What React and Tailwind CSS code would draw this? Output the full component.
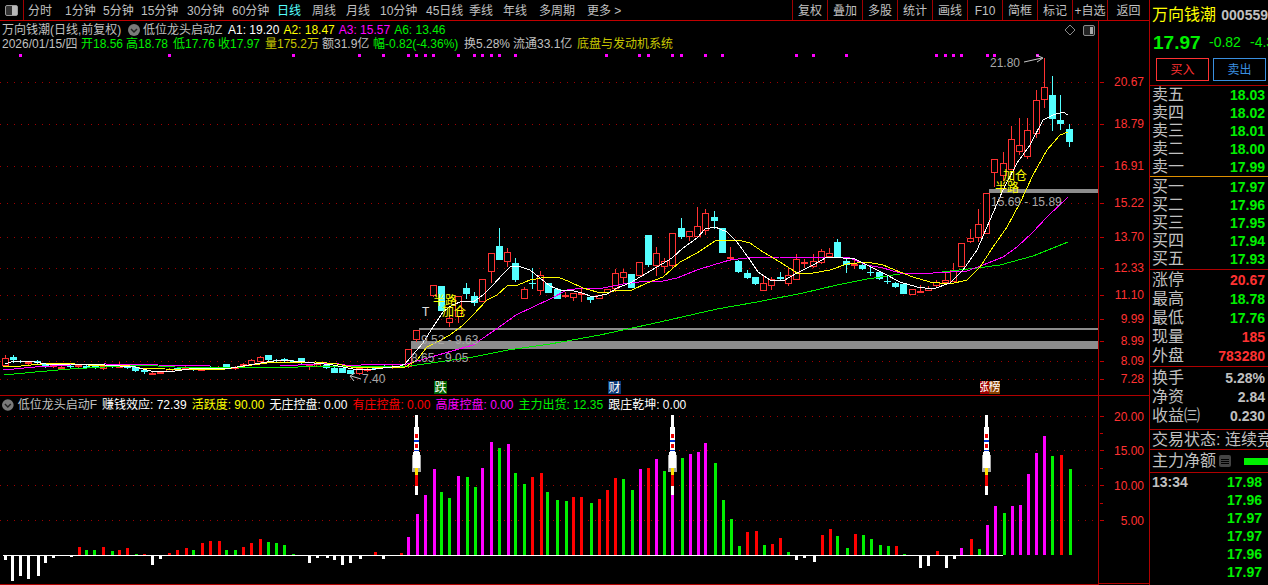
import React from "react";

const R = "#ff3232";
const C = "#54ffff";

// [x, bodyTop, bodyBottom, high, low, kind]
const candles = [
  [5,358,366,355,366,"r"],[13,357,360,355,363,"c"],[20,361,362,360,363,"c"],[28,362,364,361,365,"r"],[37,361,363,360,364,"c"],[45,364,366,363,368,"c"],[53,365,367,364,368,"r"],
  [61,367,368,365,370,"r"],[70,366,367,365,368,"c"],[78,365,367,364,368,"r"],[86,366,368,365,369,"c"],[95,366,368,365,369,"c"],[103,366,369,365,370,"r"],[112,366,367,365,368,"c"],[119,366,367,362,368,"r"],[127,367,368,366,369,"c"],
  [135,367,371,366,372,"c"],[144,370,372,369,374,"c"],[152,373,375,372,375,"r"],[160,372,373,371,374,"r"],[169,369,372,368,372,"r"],[177,368,370,367,371,"c"],[185,367,369,366,370,"r"],[193,368,370,367,371,"c"],[201,369,370,368,371,"r"],[210,367,369,366,370,"c"],[218,367,369,366,370,"r"],
  [226,364,368,364,369,"c"],[235,367,369,366,370,"r"],[243,364,366,363,367,"r"],[251,360,365,359,366,"r"],[260,357,362,356,363,"r"],[268,355,360,355,361,"c"],[276,360,361,359,362,"c"],[284,359,361,358,362,"c"],[293,361,362,360,363,"c"],
  [301,358,363,358,365,"c"],[309,365,367,365,370,"r"],[317,364,367,363,367,"r"],[326,365,368,365,369,"c"],[334,368,373,367,373,"c"],[342,368,373,368,373,"c"],[350,370,374,370,374,"c"],[359,368,374,368,375,"r"],
  [367,369,371,368,372,"r"],[375,367,369,366,370,"c"],[384,366,367,365,368,"c"],[392,366,368,365,369,"r"],[400,366,367,365,368,"r"],
  [408,349,367,349,368,"r"],[416,330,340,330,342,"r"],[433,285,296,285,297,"r"],[441,286,311,286,311,"c"],[449,318,323,316,327,"r"],[458,296,317,296,323,"r"],[466,288,294,283,299,"c"],[474,296,303,292,306,"c"],
  [482,279,302,279,302,"r"],[491,253,272,253,283,"r"],[499,246,260,228,260,"c"],[507,252,262,248,267,"r"],[515,263,280,258,282,"c"],[524,289,299,287,299,"r"],[532,283,284,268,289,"c"],[540,275,291,271,295,"r"],[548,283,293,283,293,"c"],
  [557,289,299,289,299,"c"],[565,295,296,292,298,"r"],[573,293,298,293,301,"r"],[581,293,295,287,302,"r"],[590,297,300,297,303,"c"],[599,295,299,295,299,"r"],[607,289,293,289,293,"r"],[615,273,289,269,292,"r"],[623,272,278,269,283,"r"],[631,274,288,274,288,"c"],[639,262,276,262,276,"r"],
  [648,235,265,235,267,"c"],[656,253,266,247,276,"r"],[664,261,267,258,273,"r"],[672,233,266,233,269,"r"],[681,228,237,218,239,"c"],[689,231,237,231,241,"r"],[697,226,237,207,237,"r"],[705,213,231,209,235,"r"],[714,217,221,211,229,"c"],[722,228,253,228,253,"c"],[730,257,259,247,261,"r"],[738,261,272,260,273,"c"],[747,273,278,270,279,"c"],[755,277,284,277,285,"c"],[763,283,291,275,291,"r"],[771,279,286,277,290,"r"],[780,277,279,272,281,"c"],[788,275,284,268,286,"r"],[796,259,280,254,280,"r"],[804,262,263,259,268,"r"],[813,261,267,254,268,"r"],[821,251,263,249,264,"r"],[829,253,257,248,257,"r"],[837,242,257,239,257,"c"],[846,261,265,259,273,"c"],[854,264,265,260,269,"r"],[862,265,269,264,270,"c"],[870,272,273,267,276,"c"],[879,272,279,271,280,"c"],[887,281,282,276,284,"c"],[895,283,287,282,288,"c"],
  [903,284,294,284,294,"c"],[912,289,295,289,295,"r"],[920,291,292,285,293,"r"],[928,288,291,286,291,"r"],[936,282,286,280,287,"r"],[945,280,283,273,285,"r"],[953,270,282,263,282,"r"],[961,243,267,243,267,"r"],[970,238,242,229,243,"r"],[978,224,238,209,242,"r"],[986,193,234,193,234,"r"],[994,159,173,159,187,"r"],[1003,163,176,152,181,"r"],[1011,139,170,126,170,"r"],[1019,145,152,118,155,"r"],[1027,130,157,118,159,"r"],[1036,100,134,90,138,"r"],[1044,87,100,58,108,"r"],[1052,95,119,76,131,"c"],[1060,120,124,95,130,"c"],[1069,129,142,124,147,"c"],
];

const white = "5,364 14,361 35,362 46,364 70,364 105,365 135,367 151,371 168,372 196,368 231,368 267,362 281,360 305,362 333,365 358,370 375,369 400,366 405,364 423,343 433,327 443,312 452,305 463,301 473,302 483,295 493,285 502,275 510,267 518,266 530,270 540,278 550,286 560,290 570,290 582,293 593,297 607,294 617,288 630,283 640,277 657,267 672,258 683,248 697,238 705,229 715,227 727,232 737,242 750,260 758,272 770,280 783,281 797,273 813,265 827,257 843,258 855,259 867,265 883,273 900,282 917,287 933,289 950,283 963,270 977,250 990,220 1003,190 1017,163 1030,145 1043,120 1053,115 1063,112 1068,115";
const yellow = "3,367 21,366 42,364 61,363 88,365 105,365 130,366 140,368 165,369 200,370 225,369 245,366 267,363 316,362 337,364 351,367 386,367 405,367 417,360 427,347 437,342 450,335 463,325 473,315 487,300 497,295 507,286 518,285 530,280 547,277 558,277 570,282 583,288 597,292 607,293 617,290 632,290 647,283 663,277 680,262 697,253 715,241 738,240 750,243 763,252 780,262 797,273 813,273 830,270 847,264 867,262 883,265 900,272 913,277 930,282 950,284 967,280 980,267 993,247 1007,227 1020,203 1033,175 1047,150 1060,135 1068,132";
const magenta = "3,370 35,367 70,365 105,364 158,365 210,366 280,366 333,363 351,366 372,364 407,364 438,355 473,345 495,330 516,315 550,299 567,290 583,288 603,288 623,284 647,281 663,281 677,278 697,270 713,265 730,260 747,258 780,257 830,257 850,258 867,265 883,268 900,273 933,273 967,271 983,265 1003,257 1017,247 1033,232 1047,217 1068,197";
const green = "4,375 35,372 70,369 105,367 140,365 175,367 280,368 316,366 351,367 410,366 438,362 473,357 508,350 550,344 600,335 660,322 717,309 757,302 803,293 837,285 867,279 900,274 933,273 977,268 1000,265 1033,256 1068,242";

const topGrid = [82,124,166,203,237,268,295,319,341,361,379];
const topAxis = [["20.67",82],["18.79",124],["16.91",166],["15.22",203],["13.70",237],["12.33",268],["11.10",295],["9.99",319],["8.99",341],["8.09",361],["7.28",379]];
const dots = [19,168,292,358,382,407,415,424,432,457,473,481,490,498,514,605,638,647,671,680,704,721,795,812,845,935,944,952,960,986,993,1036];

const W = "#ffffff", G = "#00f000", D = "#ff0000", M = "#ff00ff";
const barsA = [[13,-16,W],[35,-79,W],[58,-64,W],[81,-71,W],[107,-64,W],[129,-25,W],[152,-10,W],[175,-4,W],[201,-7,W],[224,25,D],[246,16,G],[269,16,G],[295,25,D],[318,13,G],[340,16,D],[363,22,D],[389,4,G],[411,4,D],[434,-29,W],[457,-13,W],[483,7,D],[506,16,D],[529,22,D],[551,16,G],[577,37,D],[600,43,D],[623,43,D],[645,16,G],[671,16,G],[694,25,D],[717,37,D],[742,49,D],[765,40,G],[788,37,G],[811,31,G],[836,4,G],[859,-4,W],[882,-25,W],[905,-10,W],[931,-10,W],[953,-16,W],[976,-31,W],[999,-25,W],[1025,-13,W],[1070,10,D],[1093,-13,W],[1142,7,D],[1164,55,M],[1188,124,M],[1213,181,M],[1236,259,M],[1258,190,G],[1281,172,G],[1307,238,M],[1330,235,G],[1353,205,G],[1375,262,M],[1401,340,M],[1424,322,G],[1447,334,M],[1469,247,G],[1495,214,G],[1518,235,D],[1541,247,D]];
const barsB = [[-7,190,G],[19,166,G],[41,163,G],[61,175,D],[81,175,D],[106,157,G],[127,169,D],[148,196,D],[171,232,D],[192,229,G],[213,196,G],[234,259,M],[257,262,D],[278,289,M],[299,253,G],[320,270,M],[344,292,G],[365,304,M],[386,310,M],[406,337,M],[430,277,G],[451,166,G],[472,109,G],[493,28,G],[516,70,D],[537,73,D],[558,31,G],[579,34,D],[602,52,D],[623,10,G],[644,-14,W],[665,-8,W],[689,-20,W],[710,61,D],[731,79,D],[751,58,G],[775,22,G],[796,64,D],[817,61,G],[838,49,G],[861,31,G],[882,28,G],[903,28,D],[924,4,G],[968,-38,W],[989,-32,W],[1010,13,D],[1034,-38,W],[1055,-11,W],[1075,22,M],[1099,49,D],[1120,19,G],[1141,91,M],[1162,148,M],[1185,127,G],[1206,148,M],[1227,151,M],[1248,244,M],[1271,307,M],[1292,358,M],[1313,298,G],[1334,301,D],[1358,259,G]];

const bars = [
  ...barsA.map(([x, h, c]) => [Math.round(x / 2.851), h, c]),
  ...barsB.map(([x, h, c]) => [Math.round(550 + x / 2.613), h, c]),
];

function Candle({ d }) {
  const [x, t, b, hi, lo, k] = d;
  const col = k === "r" ? R : C;
  return (
    <g>
      {hi < t && <rect x={x} y={hi} width="1" height={t - hi} fill={col} />}
      {lo > b && <rect x={x} y={b} width="1" height={lo - b} fill={col} />}
      {k === "r" ? (
        <rect x={x - 3 + 0.5} y={t + 0.5} width="6" height={Math.max(b - t - 1, 1)} fill="#000" stroke={col} strokeWidth="1" />
      ) : (
        <rect x={x - 3} y={t} width="7" height={Math.max(b - t, 1)} fill={col} />
      )}
    </g>
  );
}

function Rocket({ x }) {
  return (
    <g>
      <rect x={x - 1} y="415" width="3" height="80" fill="#fff" />
      <rect x={x - 2} y="427" width="5" height="25" fill="#fff" />
      <rect x={x - 1} y="434" width="3" height="4" fill="#f00000" />
      <rect x={x - 1} y="444" width="3" height="4" fill="#f00000" />
      <rect x={x - 2} y="440" width="5" height="2" fill="#0030d0" />
      <rect x={x - 2} y="450" width="5" height="1" fill="#0030d0" />
      <rect x={x - 4} y="455" width="9" height="17" fill="#a8a8a8" />
      <rect x={x - 3} y="452" width="7" height="16" fill="#fff" />
      <rect x={x - 1} y="468" width="3" height="7" fill="#ffe000" />
      <rect x={x - 1} y="475" width="3" height="11" fill="#f00000" />
    </g>
  );
}

function Round({ cls }) {
  return (
    <svg width="12" height="12" viewBox="0 0 12 12" className={cls}>
      <circle cx="6" cy="6" r="6" fill="#7a7a7a" />
      <path d="M3 5 L6 8 L9 5" fill="none" stroke="#222" strokeWidth="1.5" />
    </svg>
  );
}

const periodItems = [
  ["分时", "w-[37px]"],["1分钟", "w-[38px]"],["5分钟", "w-[38px]"],["15分钟", "w-[46px]"],["30分钟", "w-[45px]"],["60分钟", "w-[45px]"],
  ["日线", "w-[35px] text-[#54ffff]"],["周线", "w-[34px]"],["月线", "w-[34px]"],["10分钟", "w-[46px]"],["45日线", "w-[43px]"],["季线", "w-[34px]"],["年线", "w-[36px]"],["多周期", "w-[48px]"],["更多 >", "w-[34px]"],
];
const tools = ["复权","叠加","多股","统计","画线","F10","简框","标记","+自选","返回"];

const sell = [["卖五","18.03"],["卖四","18.02"],["卖三","18.01"],["卖二","18.00"],["卖一","17.99"]];
const buy = [["买一","17.97"],["买二","17.96"],["买三","17.95"],["买四","17.94"],["买五","17.93"]];
const ticks = ["17.98","17.96","17.97","17.97","17.96","17.97"];

function Row({ label, value, color = "text-[#00f000]", h = "h-[18px]" }) {
  return (
    <div className={`flex items-center justify-between pl-[2px] pr-[3px] ${h}`}>
      <span className="text-[16px] leading-none text-[#c0c0c0]">{label}</span>
      <span className={`text-[14px] font-bold leading-none ${color}`}>{value}</span>
    </div>
  );
}

export default function App() {
  return (
    <div className="flex h-[585px] w-[1268px] overflow-hidden bg-black text-[12px] leading-none text-[#c0c0c0] font-['Liberation_Sans','Noto_Sans_CJK_SC',sans-serif]">
      {/* left: toolbar and charts */}
      <div className="flex w-[1149px] shrink-0 flex-col">
        <div className="flex h-[21px] shrink-0 items-center border-b border-[#c00000]">
          <div className="flex h-[20px] w-[24px] items-center justify-center border-r border-[#a00000]">
            <div className="flex h-[11px] w-[13px] justify-end rounded-[2px] border border-[#9a9a9a] bg-[#333]">
              <div className="h-full w-[5px] bg-[#b8b8b8]" />
            </div>
          </div>
          <div className="ml-[4px] flex pt-[1px]">
            {periodItems.map(([t, c]) => (
              <span key={t} className={`whitespace-nowrap ${c}`}>{t}</span>
            ))}
          </div>
          <div className="ml-auto flex h-full">
            {tools.map((t, i) => (
              <span key={t} className={`flex h-[20px] items-center justify-center border-l border-[#a00000] pt-[1px] ${i === 9 ? "w-[42px]" : "w-[35px]"}`}>{t}</span>
            ))}
          </div>
        </div>

        <div className="flex min-h-0 flex-1">
          {/* panes */}
          <div className="flex w-[1098px] shrink-0 flex-col">
            <div className="relative h-[375px] shrink-0 border-b border-[#b00000]">
              <svg className="absolute left-0 top-[-21px]" width="1098" height="396" shapeRendering="crispEdges">
                {topGrid.map((y) => (
                  <line key={y} x1="0" x2="1098" y1={y + 0.5} y2={y + 0.5} stroke="#a00000" strokeDasharray="1 6" />
                ))}
                {dots.map((x) => <rect key={x} x={x} y="54" width="3" height="3" fill="#ff00ff" />)}
                <rect x="419" y="328" width="679" height="2" fill="#8c8c8c" />
                <rect x="411" y="341" width="687" height="8" fill="#8c8c8c" />
                <rect x="989" y="189" width="109" height="4" fill="#8c8c8c" />
                {candles.map((d) => <Candle key={d[0]} d={d} />)}
                <polyline points={green} fill="none" stroke="#00f000" />
                <polyline points={magenta} fill="none" stroke="#ff00ff" />
                <polyline points={yellow} fill="none" stroke="#ffff00" />
                <polyline points={white} fill="none" stroke="#ffffff" />
                <g shapeRendering="auto" fontSize="12" fill="#a8a8a8">
                  <text x="990" y="67">21.80</text>
                  <text x="362" y="383">7.40</text>
                  <text x="421" y="344">9.52 - 9.63</text>
                  <text x="411" y="362">8.65 - 9.05</text>
                  <text x="991" y="206">15.69 - 15.89</text>
                  <text x="422" y="316" fill="#e0e0e0">T</text>
                  <g fill="#ffff00">
                    <text x="433" y="305">半路</text>
                    <text x="442" y="316">加仓</text>
                    <text x="1003" y="180">加仓</text>
                    <text x="995" y="192">半路</text>
                  </g>
                  <path d="M1024 62 L1042 58 M1036 55 L1043 58 L1037 62" fill="none" stroke="#c8c8c8" />
                  <path d="M361 379 L351 376 M355 373 L350 376 L354 381" fill="none" stroke="#c8c8c8" />
                  <path d="M1070 25 L1075 30 L1070 35 L1065 30 Z" fill="none" stroke="#8a8a8a" />
                  <rect x="1083.5" y="25.5" width="11" height="10" rx="1.5" fill="#222" stroke="#8a8a8a" />
                  <rect x="1090" y="27" width="3" height="7" fill="#a8a8a8" />
                </g>
              </svg>

              <div className="relative flex h-[14px] items-center gap-[4px] whitespace-nowrap pl-[2px] pt-[3px]">
                <span className="mr-[7px] w-[122px]">万向钱潮(日线,前复权)</span>
                <div className="flex w-[89px] items-center gap-[3px]">
                  <Round cls="-ml-[7px]" />
                  <span>低位龙头启动Z</span>
                </div>
                <span className="text-white">A1: 19.20</span>
                <span className="text-[#ffff00]">A2: 18.47</span>
                <span className="text-[#ff00ff]">A3: 15.57</span>
                <span className="text-[#00f000]">A6: 13.46</span>
              </div>
              <div className="relative mt-[2px] flex h-[14px] items-center whitespace-nowrap pl-[2px]">
                <span className="w-[79px]">2026/01/15/四</span>
                <span className="w-[45px] text-[#00f000]">开18.56</span>
                <span className="w-[47px] text-[#00f000]">高18.78</span>
                <span className="w-[45px] text-[#00f000]">低17.76</span>
                <span className="w-[47px] text-[#00f000]">收17.97</span>
                <span className="w-[57px] text-[#c8c800]">量175.2万</span>
                <span className="w-[51px]">额31.9亿</span>
                <span className="w-[91px] text-[#00f000]">幅-0.82(-4.36%)</span>
                <span className="w-[49px]">换5.28%</span>
                <span className="w-[64px]">流通33.1亿</span>
                <span className="text-[#c8c800]">底盘与发动机系统</span>
              </div>

              <div className="absolute left-[434px] top-[360px] flex h-[13px] w-[13px] items-center justify-center bg-[#006400] text-white">跌</div>
              <div className="absolute left-[608px] top-[360px] flex h-[13px] w-[13px] items-center justify-center bg-[#0a3a78] text-white">财</div>
              <div className="absolute left-[980px] top-[360px] flex h-[13px] text-white">
                <span className="flex w-[9px] justify-end overflow-hidden bg-[#a00000]">涨</span>
                <span className="flex w-[11px] justify-center overflow-hidden bg-[#8a4000]">榜</span>
              </div>
            </div>

            <div className="relative min-h-0 flex-1 border-b border-[#b00000]">
              <svg className="absolute left-0 top-[-396px]" width="1098" height="584" shapeRendering="crispEdges">
                {[416, 450, 485, 520].map((y) => (
                  <line key={y} x1="0" x2="1098" y1={y + 0.5} y2={y + 0.5} stroke="#a00000" strokeDasharray="1 6" />
                ))}
                {bars.map(([x, h, c], i) => {
                  const p = Math.round(Math.abs(h) / 3);
                  return <rect key={i} x={x - 1} y={h > 0 ? 555 - p : 555} width="3" height={p} fill={c} />;
                })}
                <rect x="3" y="555" width="1000" height="1" fill="#fff" />
                <Rocket x={416} />
                <Rocket x={672} />
                <Rocket x={986} />
              </svg>
              <div className="relative flex h-[18px] items-center gap-[5px] whitespace-nowrap pl-[2px]">
                <div className="flex w-[95px] items-center gap-[4px]">
                  <Round />
                  <span>低位龙头启动F</span>
                </div>
                <span className="text-white">赚钱效应: 72.39</span>
                <span className="text-[#ffff00]">活跃度: 90.00</span>
                <span className="text-white">无庄控盘: 0.00</span>
                <span className="text-[#ff0000]">有庄控盘: 0.00</span>
                <span className="text-[#ff00ff]">高度控盘: 0.00</span>
                <span className="text-[#00f000]">主力出货: 12.35</span>
                <span className="text-white">跟庄乾坤: 0.00</span>
              </div>
            </div>
          </div>

          {/* price axis */}
          <div className="w-[51px] shrink-0 border-l border-[#b00000]">
            <svg width="50" height="563" className="block" fontSize="12" fill="#ff3232">
              {topAxis.map(([t, y]) => (
                <g key={t}>
                  <rect x="1" y={y - 21} width="4" height="1" fill="#c00000" />
                  <text x="45" y={y - 21 + 4} textAnchor="end">{t}</text>
                </g>
              ))}
              <rect x="0" y="374" width="50" height="1" fill="#b00000" />
              {[[416,"20.00"],[450,"15.00"],[485,"10.00"],[520,"5.00"]].map(([y, t]) => (
                <g key={t}>
                  <rect x="1" y={y - 21} width="4" height="1" fill="#c00000" />
                  <text x="45" y={y - 21 + 5} textAnchor="end">{t}</text>
                </g>
              ))}
              {[433, 468, 503].map((y) => <rect key={y} x="1" y={y - 21} width="3" height="1" fill="#c00000" />)}
              <rect x="0" y="562" width="50" height="1" fill="#b00000" />
            </svg>
          </div>
        </div>
      </div>

      {/* right quote panel */}
      <div className="flex min-w-0 flex-1 flex-col overflow-hidden border-l border-[#b00000]">
        <div className="flex h-[30px] shrink-0 items-center justify-between whitespace-nowrap pl-[2px]">
          <span className="text-[16px] text-[#ffff00]">万向钱潮</span>
          <span className="ml-[3px] text-[14px] font-bold">000559</span>
        </div>
        <div className="flex h-[24px] shrink-0 items-center overflow-hidden whitespace-nowrap pl-[3px] text-[#00f000]">
          <span className="w-[56px] shrink-0 text-[19px] font-bold">17.97</span>
          <span className="w-[41px] shrink-0 text-[14px]">-0.82</span>
          <span className="shrink-0 text-[14px]">-4.36%</span>
        </div>
        <div className="flex h-[31px] shrink-0 items-start gap-[4px] pl-[6px] pt-[4px]">
          <span className="flex h-[23px] w-[53px] items-center justify-center border border-[#ff3232] text-[#ff3232]">买入</span>
          <span className="flex h-[23px] w-[53px] items-center justify-center border border-[#3a90e0] text-[#3a90e0]">卖出</span>
        </div>
        <div className="h-[91px] shrink-0 border-t border-[#b00000]">
          {sell.map(([a, b]) => <Row key={a} label={a} value={b} />)}
        </div>
        <div className="h-[93px] shrink-0 border-t border-[#e09000] pt-[1px]">
          {buy.map(([a, b]) => <Row key={a} label={a} value={b} />)}
        </div>
        <div className="h-[97px] shrink-0 border-t border-[#b00000]">
          <Row label="涨停" value="20.67" color="text-[#ff3232]" h="h-[19px]" />
          <Row label="最高" value="18.78" h="h-[19px]" />
          <Row label="最低" value="17.76" h="h-[19px]" />
          <Row label="现量" value="185" color="text-[#ff3232]" h="h-[19px]" />
          <Row label="外盘" value="783280" color="text-[#ff3232]" h="h-[19px]" />
        </div>
        <div className="h-[63px] shrink-0 border-t border-[#b00000] pt-[1px]">
          <Row label="换手" value="5.28%" color="text-[#c0c0c0]" h="h-[19px]" />
          <Row label="净资" value="2.84" color="text-[#c0c0c0]" h="h-[19px]" />
          <Row label="收益㈢" value="0.230" color="text-[#c0c0c0]" h="h-[19px]" />
        </div>
        <div className="flex h-[20px] shrink-0 items-center overflow-hidden whitespace-nowrap border-t border-[#b00000] pl-[2px] text-[16px]">交易状态: 连续竞价</div>
        <div className="flex h-[23px] shrink-0 items-center border-t border-[#b00000] pl-[2px]">
          <span className="text-[16px]">主力净额</span>
          <span className="ml-[3px] flex h-[12px] w-[12px] flex-col justify-center gap-[1px] rounded-[2px] bg-[#444] px-[2px]">
            <span className="h-px bg-black" />
            <span className="h-px bg-black" />
            <span className="h-px bg-black" />
          </span>
          <span className="ml-auto h-[7px] w-[24px] bg-[#00f000]" />
        </div>
        <div className="flex flex-1 flex-col border-t border-[#b00000] pl-[2px] pr-[6px]">
          {ticks.map((t, i) => (
            <div key={i} className="flex h-[18px] shrink-0 items-center justify-between text-[14px] font-bold">
              <span>{i === 0 ? "13:34" : ""}</span>
              <span className="text-[#00f000]">{t}</span>
            </div>
          ))}
        </div>
      </div>
    </div>
  );
}
